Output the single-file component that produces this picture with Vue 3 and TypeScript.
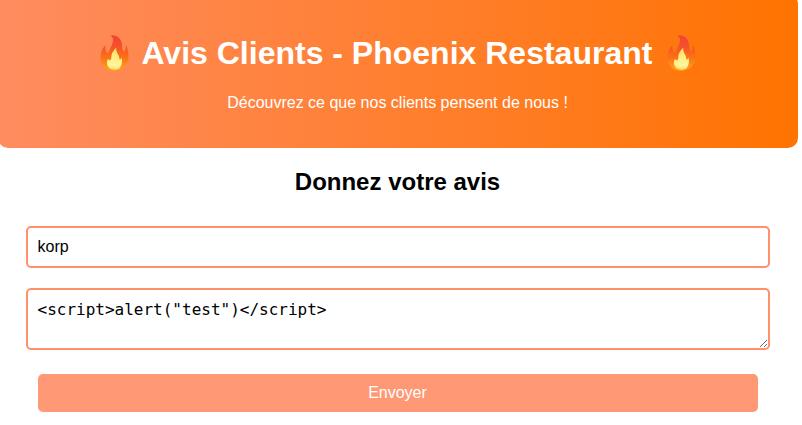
<script setup lang="ts">
import { ref } from 'vue'
const name = ref('korp')
const review = ref('<script>alert("test")<\/script>')
</script>

<template>
  <main class="page">
    <svg class="defs" width="0" height="0" aria-hidden="true">
      <defs>
        <linearGradient id="outer" x1="0" y1="0" x2="0" y2="1">
          <stop offset="0" stop-color="#f24438" />
          <stop offset=".32" stop-color="#f6512a" />
          <stop offset=".65" stop-color="#fb7415" />
          <stop offset="1" stop-color="#ffa719" />
        </linearGradient>
        <linearGradient id="inner" x1="0" y1="0" x2="0" y2="1">
          <stop offset="0" stop-color="#ffdf64" />
          <stop offset=".55" stop-color="#fff08a" />
          <stop offset=".82" stop-color="#fff3a2" />
          <stop offset="1" stop-color="#ffe04b" />
        </linearGradient>
        <symbol id="flame" viewBox="10.5 22 119 111">
          <path fill="url(#outer)" d="M60 24C73 20 86 27 92 40C97 51 93 60 98 69C102 75 106 68 106 53C111 60 114 73 114 86C114 112 96 129 71 129C46 129 30 113 30 90C30 76 35 61 45 53C43 65 46 75 52 76C57 72 57 66 60 60C67 47 73 31 60 24Z" />
          <path fill="url(#inner)" d="M77 60C76 69 80 76 84 83C87 89 86 94 88 96C91 95 92 92 92 89C97 99 94 113 88 120C80 129 61 128 54 119C48 111 48 99 53 93C54 97 56 98 59 98C64 94 61 87 64 79C67 71 71 66 77 60Z" />
        </symbol>
      </defs>
    </svg>
    <header class="hero">
      <h1><svg class="flame" aria-hidden="true"><use href="#flame" /></svg> Avis Clients - Phoenix Restaurant <svg class="flame" aria-hidden="true"><use href="#flame" /></svg></h1>
      <p>Découvrez ce que nos clients pensent de nous !</p>
    </header>
    <h2>Donnez votre avis</h2>
    <form class="form" @submit.prevent>
      <input v-model="name" class="field name" type="text" />
      <textarea v-model="review" class="field review" spellcheck="false"></textarea>
      <button type="submit">Envoyer</button>
    </form>
  </main>
</template>

<style>
body { overflow: hidden; background: #fff; }
#app { display: flow-root; }
</style>

<style scoped>
.page { width: 800px; margin: -6px 0 0 -2.5px; font: 16px "Liberation Sans", Arial, sans-serif; color: #000; }
.defs { display: block; }
.hero { box-sizing: border-box; height: 154px; padding: 41.44px 20px 0; text-align: center; color: #fff; background: linear-gradient(to right, #ff8c61, #ff7300); border-radius: 10px; }
h1 { margin: 0; font-size: 32px; line-height: 37px; }
.flame { width: 39.7px; height: 37px; vertical-align: top; }
.hero p { margin: 21.44px 0 0; line-height: 18px; }
h2 { margin: 20px 0 30px; font-size: 24px; line-height: 28px; text-align: center; }
.form { display: flex; flex-direction: column; padding: 0 28px; }
.field { box-sizing: border-box; width: 744px; margin: 0 0 20px; padding: 10px; border: 2px solid #ff906c; border-radius: 5px; background: #fff; color: #000; outline: none; }
.name { height: 42px; font: 16px "Liberation Sans", Arial, sans-serif; }
.review { height: 62px; font: 16px "DejaVu Sans Mono", monospace; margin-bottom: 24px; overflow: hidden; }
button { align-self: center; width: 720px; height: 38px; border: 0; border-radius: 5px; background: #ff9874; color: #fff; font: 16px "Liberation Sans", Arial, sans-serif; }
</style>
